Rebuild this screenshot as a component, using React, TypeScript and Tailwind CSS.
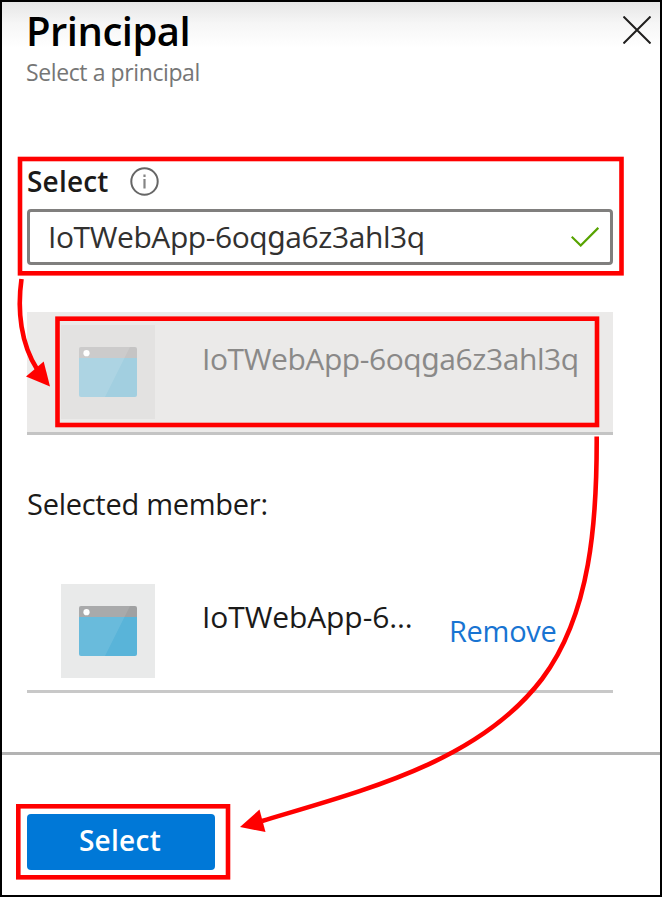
import React from "react";

function AppTile({ muted = false }: { muted?: boolean }) {
  return (
    <div
      className={
        muted
          ? "flex h-[94px] w-[94px] shrink-0 items-center justify-center bg-[#e3e2e1]"
          : "flex h-[94px] w-[94px] shrink-0 items-center justify-center bg-[#e9eaea]"
      }
    >
      <svg width="58" height="50" viewBox="0 0 58 50" className="block">
        <path d="M0 10H58V48Q58 50 56 50H2Q0 50 0 48Z" fill={muted ? "#a2cfe0" : "#59b4d9"} />
        <path d="M2 0H56Q58 0 58 2V11H0V2Q0 0 2 0Z" fill={muted ? "#c5c4c4" : "#a0a1a2"} />
        <path d="M2 0H51L26 50H2Q0 50 0 48V2Q0 0 2 0Z" fill="#fff" fillOpacity={muted ? 0.12 : 0.1} />
        <circle cx="7.5" cy="6.2" r="3.1" fill="#fff" />
      </svg>
    </div>
  );
}

function PrincipalName() {
  return (
    <>
      IoTWebApp-6oq<span className="font-['Noto_Sans',sans-serif]">g</span>a6z3ahl3q
    </>
  );
}

export default function App() {
  return (
    <div className="relative flex h-[897px] w-[662px] flex-col overflow-hidden border-2 border-black bg-white font-['Open_Sans',sans-serif] text-[#1b1a19]">
      <header className="flex h-[154px] shrink-0 justify-between bg-linear-to-b from-[#e6e6e6] from-0% via-[#f6f6f6] via-[14%] to-white to-[30%] pr-[9px] pl-[24px]">
        <div>
          <h1 className="mt-[5px] h-[48px] text-[40px] leading-[48px] font-semibold tracking-[-0.5px] whitespace-nowrap text-black">Principal</h1>
          <p className="mt-[2px] h-[30px] text-[23px] leading-[30px] tracking-[-0.4px] whitespace-nowrap text-[#767676]">Select a principal</p>
        </div>
        <svg width="28" height="28" viewBox="0 0 28 28" className="mt-[14px]" fill="none" stroke="#201f1e" strokeWidth="2">
          <path d="M.5 .5 27.5 27.5M27.5 .5 .5 27.5" />
        </svg>
      </header>

      <main className="flex flex-1 flex-col pr-[47px] pl-[25px]">
        <div className="flex h-[50px] items-center gap-[22px]">
          <label className="w-[81px] text-[28px] leading-[38px] font-semibold tracking-[0.2px] whitespace-nowrap">Select</label>
          <svg width="29" height="29" viewBox="0 0 29 29" fill="none" stroke="#666" strokeWidth="2">
            <circle cx="14.5" cy="14.5" r="13.2" />
            <path d="M14.5 12V21.5M14.5 7.5V10" stroke="#858585" strokeWidth="2.2" />
          </svg>
        </div>
        <div className="mt-[3px] flex h-[56px] items-center justify-between rounded-[4px] border-[3px] border-[#807f7e] pr-[11px] pl-[18px] text-[30px] leading-[40px] tracking-[-0.42px] whitespace-nowrap text-[#323130]">
          <span><PrincipalName /></span>
          <svg width="28" height="20" viewBox="0 0 28 20" fill="none" stroke="#57a300" strokeWidth="2.2">
            <path d="M.7 9.7 9.7 18.5 27.3 .8" />
          </svg>
        </div>

        <div className="mt-[47px] flex h-[123px] border-b-[3px] border-[#c4c4c4] bg-[#ebeae9] pt-[13px] pl-[34px]">
          <AppTile muted />
          <span className="mt-[14px] ml-[47px] h-[40px] text-[30px] leading-[40px] tracking-[-0.42px] whitespace-nowrap text-[#8a8988]"><PrincipalName /></span>
        </div>

        <p className="mt-[49px] h-[40px] text-[29px] leading-[40px] tracking-[-0.27px] whitespace-nowrap">Selected member:</p>

        <div className="mt-[60px] flex h-[109px] border-b-[3px] border-[#c8c8c8] pl-[34px]">
          <AppTile />
          <span className="mt-[13px] ml-[47px] w-[211px] text-[30px] leading-[40px] tracking-[-0.1px] whitespace-nowrap">IoTWebApp-6...</span>
          <a className="mt-[27px] ml-[36px] text-[29px] leading-[40px] tracking-[-0.3px] whitespace-nowrap text-[#1874d2]">Remove</a>
        </div>
      </main>

      <footer className="h-[143px] shrink-0 border-t-[3px] border-[#b3b3b3] pt-[59px] pl-[25px]">
        <button className="block h-[56px] w-[188px] rounded-[4px] bg-[#0078d7] pr-[2px] pb-[4px] text-center text-[28px] leading-[52px] font-semibold tracking-[0.3px] text-white">Select</button>
      </footer>

      <svg width="662" height="897" viewBox="0 0 662 897" className="pointer-events-none absolute -top-[2px] -left-[2px]" fill="none" stroke="#ff0000" strokeWidth="4.6">
        <rect x="20" y="159" width="601.5" height="114.3" />
        <rect x="57.5" y="318.7" width="539.5" height="106.3" />
        <rect x="18.3" y="806.3" width="209.7" height="71" />
        <path d="M21.5 279C17 311 21 344 37 369" />
        <path d="M596.7 436.5C597 520 591 614 542 679C479 762 365 790 262 821" />
        <path d="M50 386.5 43.7 361.5 26 376.5Z" fill="#ff0000" stroke="none" />
        <path d="M240 827 259.5 809.5 265.5 832Z" fill="#ff0000" stroke="none" />
      </svg>
    </div>
  );
}
